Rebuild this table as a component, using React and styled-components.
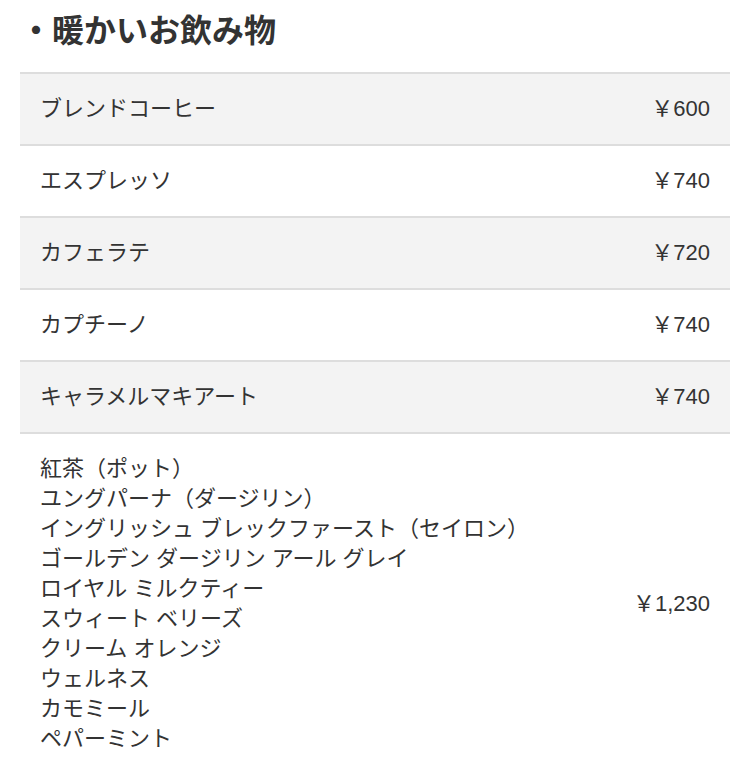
import React from 'react';
import styled, { createGlobalStyle } from 'styled-components';

const menu = [
  { name: ['ブレンドコーヒー'], price: '￥600' },
  { name: ['エスプレッソ'], price: '￥740' },
  { name: ['カフェラテ'], price: '￥720' },
  { name: ['カプチーノ'], price: '￥740' },
  { name: ['キャラメルマキアート'], price: '￥740' },
  {
    name: [
      '紅茶（ポット）',
      'ユングパーナ（ダージリン）',
      'イングリッシュ ブレックファースト（セイロン）',
      'ゴールデン ダージリン アール グレイ',
      'ロイヤル ミルクティー',
      'スウィート ベリーズ',
      'クリーム オレンジ',
      'ウェルネス',
      'カモミール',
      'ペパーミント',
    ],
    price: '￥1,230',
  },
];

const GlobalStyle = createGlobalStyle`
  html, body {
    margin: 0;
    padding: 0;
    background: #fff;
  }
  body {
    font-family: "Liberation Sans", "Noto Sans CJK JP", sans-serif;
    color: #333;
  }
`;

const Page = styled.div`
  padding: 0 20px;
`;

const Title = styled.h2`
  margin: 0 0 10px;
  height: 62px;
  font-size: 32px;
  line-height: 62px;
  font-weight: bold;
  color: #333;
`;

const MenuList = styled.ul`
  margin: 0;
  padding: 0;
  list-style: none;
`;

const MenuRow = styled.li`
  display: flex;
  align-items: center;
  justify-content: space-between;
  padding: 20px;
  border-top: 2px solid #ddd;
  background: ${props => (props.$shaded ? '#f3f3f3' : '#fff')};
  font-size: 22px;
  line-height: 30px;
`;

const Names = styled.div`
  display: flex;
  flex-direction: column;
`;

const Price = styled.span`
  white-space: nowrap;
`;

function App() {
  return (
    <Page>
      <GlobalStyle />
      <Title>・暖かいお飲み物</Title>
      <MenuList>
        {menu.map((item, i) => (
          <MenuRow key={item.price + i} $shaded={i % 2 === 0}>
            <Names>
              {item.name.map(n => (
                <span key={n}>{n}</span>
              ))}
            </Names>
            <Price>{item.price}</Price>
          </MenuRow>
        ))}
      </MenuList>
    </Page>
  );
}

export default App;
